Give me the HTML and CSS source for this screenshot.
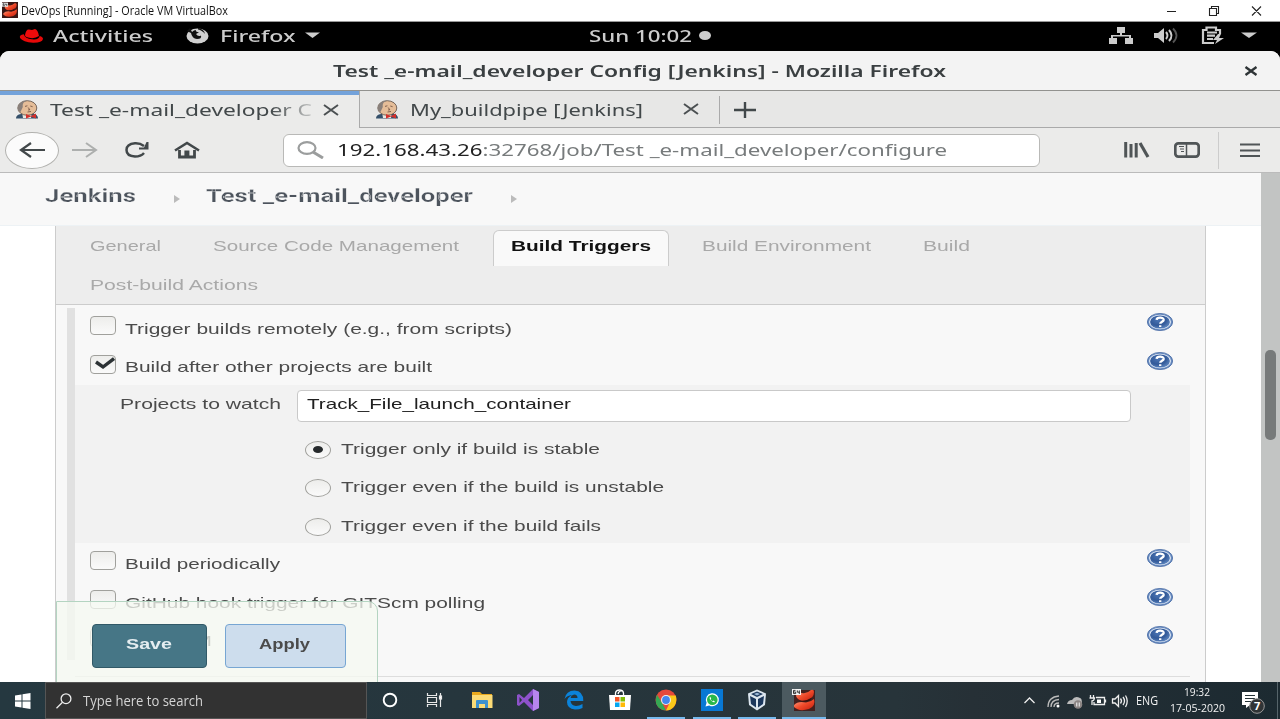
FILE: index.html
```html
<!DOCTYPE html>
<html lang="en">
<head>
<meta charset="utf-8">
<title>DevOps [Running] - Oracle VM VirtualBox</title>
<link rel="stylesheet" href="styles.css">
</head>
<body>
<svg class="defs" width="0" height="0">
  <defs>
    <radialGradient id="blue" cx=".4" cy=".35" r=".8"><stop offset="0" stop-color="#4a74b4"/><stop offset=".5" stop-color="#335a99"/><stop offset="1" stop-color="#6f98cf"/></radialGradient>
    <linearGradient id="hatred" x1="0" y1="0" x2="1" y2="1"><stop offset="0" stop-color="#ffa88a"/><stop offset=".5" stop-color="#f04a2a"/><stop offset="1" stop-color="#c01c0c"/></linearGradient>
    <symbol id="help" viewBox="0 0 26 18"><ellipse cx="13" cy="9" rx="12.6" ry="8.600" fill="#6a8dc2" stroke="#4669a3" stroke-width=".8"/><ellipse cx="13" cy="9" rx="11" ry="7.300" fill="#e3eaf5"/><ellipse cx="13" cy="9" rx="9.900" ry="6.600" fill="url(#blue)"/><path d="M9.600 6.800C9.800 3.900 16.800 3.800 16.700 6.900C16.600 8.700 13.200 8.700 13.200 10.800M13.200 12.200V14" fill="none" stroke="#fff" stroke-width="2.300"/></symbol>
    <symbol id="butler" viewBox="0 0 24 19"><path d="M1 18.500Q1 14.500 6 14L18 13.500Q23 14.500 23 18.500Z" fill="#34506a"/><path d="M7 12L17 12L16 18H8Z" fill="#ece7df"/><ellipse cx="12.300" cy="8" rx="9.500" ry="7.300" fill="#e5bd98" stroke="#594b42" stroke-width=".8"/><path d="M3.500 11C1 4 7 .4 13 .6C8 2 7.500 4 7.800 7L5.500 12Z" fill="#89807b"/><path d="M10 6.400L12.400 5.800M15.300 6L17.600 6.700M13.200 7.500L14.800 9.800L13 10M12.500 12L16 11.500" stroke="#65483a" fill="none" stroke-width=".8"/><path d="M11 14L16 16L21 13.500V18.500L16 16.500L11 18.500Z" fill="#d3302c"/></symbol>
    <symbol id="redhat" viewBox="0 0 24 24"><path d="M4 8Q5 4 10 5Q15 6 19 2Q22 1 22 4Q22 10 15 12.500Q6 14 4 8Z" fill="url(#hatred)"/><path d="M2 17Q6 12.500 14 14.500Q19 14 22 11Q24 18 17 21Q7 24 2 19Z" fill="url(#hatred)"/><path d="M7 12.500Q13 14 20 9.500L18 12.500Q12 15 7 12.500Z" fill="#38100d"/><rect x="0" y="1" width="9" height="6" fill="#f4f4f4"/><path d="M3.500 2.400H1.500V5.600H3.700V4H1.500M5.300 2.400V4.200H7.600M7.300 2.400V6" stroke="#222" fill="none" stroke-width=".9"/></symbol>
  </defs>
</svg>

<header class="host-title">
  <svg class="host-logo" width="16" height="16"><rect width="16" height="16" fill="#3a1715"/><use href="#redhat" width="16" height="16"/></svg>
  <span class="fit" data-w="207">DevOps [Running] - Oracle VM VirtualBox</span>
  <svg class="host-controls" width="94" height="14" fill="none" stroke="#222" stroke-width="1.100"><path d="M1 7.500H10M43.500 4.500H50.500V11.500H43.500ZM45.500 4V2.500H52.500V9.500H51M86 2.500L95 11.500M95 2.500L86 11.500" /></svg>
</header>

<nav class="gnome">
  <svg class="fedora" width="25" height="16"><path d="M6 7Q7 1 10 1.400L13 2L16 1Q19 2 20 8Q16 11 10 9.800Q6 9 6 7Z" fill="#f00b0b"/><path d="M4.800 6.300Q0 7 1 10Q4 14 14 14.800Q23 15 24 11Q24 9 20.700 8Q20 12 13 11.300Q6 10.700 4.800 6.300Z" fill="#e60808"/></svg>
  <span class="fit" data-w="100">Activities</span>
  <svg class="fox" width="23" height="16"><ellipse cx="11.500" cy="8" rx="11" ry="7.600" fill="#d0d0d0"/><path d="M4 0L6 4Q8 2 10 2Q9 4 13 4.200L10 6Q12 9 15 7.500Q16 11 11 11Q6 10.500 5 5L1 3ZM12 0Q18 1 19 6Q16 2 12 1.500Z" fill="#111"/></svg>
  <span class="fit" data-w="75.500">Firefox</span>
  <svg class="caret" width="15" height="7"><path d="M0 0.500H15L7.500 6Z" fill="#ccc"/></svg>
  <span class="fit clock" data-w="103">Sun 10:02</span>
  <i class="dot"></i>
  <svg class="gnome-tray" width="150" height="20" fill="#ccc"><path d="M8 1H16V7H13V9H22V12H24V18H16V12H20V10.500H4V12H8V18H0V12H2V9H11V7H8Z"/><path d="M45 7H49L55 2V17L49 12H45Z"/><path d="M57 6Q60 9.500 57 13M60 4Q65 9.500 60 15" fill="none" stroke="#ccc" stroke-width="2"/><path d="M64 2.500Q71 9.500 64 16.500" fill="none" stroke="#555" stroke-width="1.800"/><path d="M105 17H94V4H97.500V1.500H107V4H111V8M98 6.500H108M98 9.700H106M98 13H104" fill="none" stroke="#ccc" stroke-width="2.200"/><path d="M109 8L104 14H108L106 18L115 12H110L112 8Z"/><path d="M132 6.500H148L140 12Z"/></svg>
</nav>

<div class="guest">
<header class="window-title">
  <b class="fit" data-w="613">Test _e-mail_developer Config [Jenkins] - Mozilla Firefox</b>
  <svg width="14" height="10"><path d="M1.500 1L12.500 9M12.500 1L1.500 9" stroke="#2e3436" stroke-width="2.400"/></svg>
</header>

<div class="tabs">
  <div class="tab active">
    <svg width="24" height="19"><use href="#butler"/></svg>
    <span class="fade"><span class="fit" data-w="262">Test _e-mail_developer C</span></span>
    <svg class="x" width="16" height="12"><path d="M1 1L15 11M15 1L1 11" stroke="#4b5052" stroke-width="2"/></svg>
  </div>
  <div class="tab">
    <svg width="24" height="19"><use href="#butler"/></svg>
    <span class="fit" data-w="233">My_buildpipe [Jenkins]</span>
    <svg class="x" width="16" height="12"><path d="M1 1L15 11M15 1L1 11" stroke="#4b5052" stroke-width="2"/></svg>
  </div>
  <div class="strip"><i class="split"></i>
  <svg class="plus" width="22" height="16"><path d="M0 8H22M11 0V16" stroke="#42484a" stroke-width="2.400"/></svg></div>
</div>

<div class="toolbar">
  <div class="back"><svg width="26" height="16" fill="none" stroke="#42484a" stroke-width="2.200"><path d="M26 8H2M12 1L2 8L12 15"/></svg></div>
  <svg class="fwd" width="26" height="16" fill="none" stroke="#adafae" stroke-width="2"><path d="M0 8H24M14 1L24 8L14 15"/></svg>
  <svg class="reload" width="26" height="18" fill="none" stroke="#42484a" stroke-width="2.500"><path d="M20 5Q16 2 11 2.300Q2.500 3 2.500 9Q2.500 15 11 15.600Q17 15.600 20 12"/><path d="M24.500 1V8.500H15V6.500H20L22.500 1Z" fill="#42484a" stroke="none"/></svg>
  <svg class="home" width="26" height="18" fill="none" stroke="#42484a"><path d="M1 9.500L13 2L25 9.500" stroke-width="2.600"/><path d="M5.500 9V16H20.500V9" stroke-width="2.800"/><path d="M12.900 16V9.500" stroke-width="5"/></svg>
  <div class="url"><svg width="27" height="18" fill="none" stroke="#9b9d9d"><ellipse cx="10" cy="7" rx="8.500" ry="5.800" stroke-width="2.200"/><path d="M16 11L26 17" stroke-width="3"/></svg><span class="fit" data-w="610"><em>192.168.43.26</em>:32768/job/Test _e-mail_developer/configure</span></div>
  <svg class="lib" width="26" height="16" fill="none" stroke="#505557"><path d="M1.700 0V15.500M7 2V15.500M12.200 1V15.500" stroke-width="3"/><path d="M16 1L24 15" stroke-width="3.200"/></svg>
  <svg class="side" width="26" height="16" fill="none" stroke="#505557"><rect x="1.300" y="1.400" width="23.400" height="13.200" rx="3" stroke-width="2.700"/><path d="M12.500 1V15" stroke-width="1.500"/><path d="M5 4.500H10M6 7H10M7 9.500H10" stroke-width="1"/></svg>
  <i class="vline"></i>
  <svg class="menu" width="20" height="15"><path d="M0 1.500H20M0 7.500H20M0 13H20" stroke="#505557" stroke-width="2.200"/></svg>
</div>

<main class="page">
  <div class="view">
    <div class="crumbs">
      <b class="fit" data-w="91">Jenkins</b>
      <i></i>
      <b class="fit" data-w="267">Test _e-mail_developer</b>
      <i></i>
    </div>
    <section class="config">
      <div class="sections">
        <div class="line">
          <span class="fit" data-w="71">General</span>
          <span class="fit scm" data-w="246">Source Code Management</span>
          <div class="current"><b class="fit" data-w="140">Build Triggers</b></div>
          <span class="fit" data-w="169">Build Environment</span>
          <span class="fit bld" data-w="47">Build</span>
        </div>
        <div class="line second"><span class="fit" data-w="168">Post-build Actions</span></div>
      </div>
      <div class="form">
        <div class="rail"></div>
        <div class="rows">
          <div class="row"><span class="check"></span><span class="fit" data-w="387">Trigger builds remotely (e.g., from scripts)</span><svg class="help"><use href="#help"/></svg></div>
          <div class="row"><span class="check"><svg width="24" height="16"><path d="M5 6L12 11L23 2.500" fill="none" stroke="#2c3235" stroke-width="3.400"/></svg></span><span class="fit" data-w="307">Build after other projects are built</span><svg class="help"><use href="#help"/></svg></div>
          <div class="nested">
            <div class="watch"><span class="fit" data-w="161">Projects to watch</span><div class="field"><span class="fit" data-w="264">Track_File_launch_container</span></div></div>
            <div class="option"><span class="radio on"></span><span class="fit" data-w="259">Trigger only if build is stable</span></div>
            <div class="option"><span class="radio"></span><span class="fit" data-w="323">Trigger even if the build is unstable</span></div>
            <div class="option"><span class="radio"></span><span class="fit" data-w="260">Trigger even if the build fails</span></div>
          </div>
          <div class="row low"><span class="check"></span><span class="fit" data-w="155">Build periodically</span><svg class="help"><use href="#help"/></svg></div>
          <div class="row low"><span class="check"></span><span class="fit" data-w="360">GitHub hook trigger for GITScm polling</span><svg class="help"><use href="#help"/></svg></div>
          <div class="row low"><span class="check"></span><span class="fit" data-w="87">Poll SCM</span><svg class="help"><use href="#help"/></svg></div>
        </div>
      </div>
    </section>
    <div class="sticky"><button class="save"><b class="fit" data-w="46">Save</b></button><button class="apply"><b class="fit" data-w="51">Apply</b></button></div>
  </div>
  <div class="scroll"><i></i></div>
</main>
</div>

<footer class="taskbar">
  <div class="start"><svg width="16" height="16" fill="#fff"><path d="M0 2.400L6.500 1.500V7.500H0ZM7.500 1.300L15.500 0V7.500H7.500ZM0 8.500H6.500V14.500L0 13.600ZM7.500 8.500H15.500V16L7.500 14.700Z"/></svg></div>
  <div class="search"><svg width="16" height="16" fill="none" stroke="#eee" stroke-width="1.300"><circle cx="10" cy="5.700" r="4.900"/><path d="M6.500 9.200L.500 15.300"/></svg><span class="fit" data-w="120">Type here to search</span></div>
  <div class="app"><svg width="16" height="16"><circle cx="8" cy="8" r="6.300" fill="none" stroke="#fff" stroke-width="1.900"/></svg></div>
  <div class="app task"><svg width="17" height="16" fill="none" stroke="#e8e8e8" stroke-width="1.200"><path d="M1.500 1V3.500H10.500V1M1.500 15V12.500H10.500V15M1.500 5.500H10.500V10.500H1.500ZM14.500 1V15"/><rect x="13.500" y="4" width="2" height="3" fill="#fff"/></svg></div>
  <div class="app"><svg width="21" height="18"><path d="M0 1H8L10 3H20V17H0Z" fill="#e9a91e"/><path d="M0 4H20.500V17H0Z" fill="#fbdb76"/><path d="M4 17V10Q4 9 5 9H15Q16 9 16 10V17H13V13H7V17Z" fill="#3d91cf"/></svg></div>
  <div class="app"><svg width="24" height="22"><path d="M17 0L23 3V19L17 22L8 13L3 17L1 16V6L3 5L8 9ZM17 6L12 11L17 16ZM3.500 8V14L6 11Z" fill="#8e52cb" fill-rule="evenodd"/><path d="M17 0L23 3V19L17 22Z" fill="#b785ed"/></svg></div>
  <div class="app"><svg width="20" height="20"><path d="M.500 9Q2 .5 10.500 .5Q19.500 1 19.300 11H6.500Q7 15.500 12 16Q15 16 18.500 14V18Q15 19.600 11 19.500Q3 18.500 3 12Q3 7.500 8 5Q3 5.500 .5 9ZM6.700 8H13.500Q13.500 4.500 10.300 4.500Q7 5 6.700 8Z" fill="#0b83da" fill-rule="evenodd"/></svg></div>
  <div class="app"><svg width="22" height="22"><path d="M6.500 6V4Q7 1 10.500 1Q14 1 14.500 4V6M9 5Q10 1 14 2" fill="none" stroke="#fff" stroke-width="1.300"/><path d="M0 6H22L21 21H1Z" fill="#fff"/><path d="M6 8H10.500V12.500H6Z" fill="#f35325"/><path d="M11.500 8H16V12.500H11.500Z" fill="#81bc06"/><path d="M6 13.500H10.500V18H6Z" fill="#05a6f0"/><path d="M11.500 13.500H16V18H11.500Z" fill="#ffba08"/></svg></div>
  <div class="app running"><svg width="22" height="22"><circle cx="11" cy="11" r="10.500" fill="#e5493a"/><path d="M2 5.700L8 15.500L11 21.500Q3 21 1 14Q0 10 2 5.700Z" fill="#35a853"/><path d="M11 6.500H20.700Q22.500 12 19.500 17Q16 21.500 11 21.500L15 13Z" fill="#fbc919"/><circle cx="11" cy="11" r="5" fill="#eee"/><circle cx="11" cy="11" r="3.900" fill="#4386ed"/></svg></div>
  <div class="app running"><svg width="22" height="22"><rect width="22" height="22" fill="#0878d4"/><path d="M4.500 17.500L5.600 13.700A6.500 6.500 0 1 1 8.200 16.400Z" fill="#fff"/><circle cx="11.300" cy="10.800" r="5.300" fill="#28b84b"/><path d="M9.200 7.800Q7.700 9 10 11.600Q12.700 14.400 14 12.700L12.400 11.500L11.500 12.200Q10 11.200 9.700 10.200L10.200 9.500Z" fill="#fff"/></svg></div>
  <div class="app running vbox"><svg width="20" height="22"><path d="M10 .5L19 4.500L18 16L10 21.500L2 16L1 4.500Z" fill="#dce6ef"/><path d="M10 2.500L16 5L10 8L4 5ZM3 7L9 10V18.500L4 15ZM17 7L11 10V18.500L16 15Z" fill="#1b375c"/><path d="M10 3.700L13 5L10 6.500L7 5Z" fill="#9ab7d5"/></svg></div>
  <div class="app running focus"><svg width="24" height="24"><rect x="2" y="2" width="21" height="21" fill="#44201e"/><use href="#redhat" width="24" height="24"/></svg></div>
  <div class="tray">
    <svg class="status" width="104" height="16" fill="none" stroke="#eee" stroke-width="1.300"><path d="M.500 10L5.500 5L10.500 10"/><path d="M24 14Q24 4 35 3M27 14Q27 7 35 6.500M30 14Q30 10 35 10" stroke="#bbb"/><circle cx="34" cy="13" r="1.500" fill="#fff" stroke="none"/><path d="M43 11Q44 7 48 7Q51 2 56 5Q58 5 58 11H43Z" fill="#bbb" stroke="none"/><circle cx="54" cy="11.500" r="4.300" fill="#8c8584" stroke="none"/><path d="M52.700 9.500V13.500M55.300 9.500V13.500" stroke="#ddd"/><path d="M72 4.500H80.500V11.500H70V9M81.500 6.500V9.500M66.500 2V5M69.500 2V5M65.500 5H70.500Q70 8 68 8V12" /><rect x="73" y="6.500" width="4" height="3.500" fill="#fff" stroke="none"/><path d="M88.500 6H91L94.500 2.500V13.500L91 10H88.500ZM96.500 5.500Q98.500 8 96.500 10.500M99 4Q102 8 99 12M101.500 2.500Q105 8 101.500 14"/></svg>
    <span class="fit lang" data-w="22">ENG</span>
    <div class="when"><span class="fit" data-w="26">19:32</span><span class="fit" data-w="55">17-05-2020</span></div>
    <svg class="note" width="24" height="24"><path d="M0 1H16V14H8L4 17V14H0Z" fill="#fff"/><path d="M3 4.500H13M3 7.500H13M3 10.500H10" stroke="#263439"/><circle cx="15" cy="15" r="7.300" fill="#303436" stroke="#999"/><text x="12" y="19">7</text></svg>
    <i class="peek"></i>
  </div>
</footer>
<script src="fit.js"></script>
</body>
</html>
```
FILE: styles.css
```css
* { box-sizing: border-box; }
body { margin: 0; width: 1280px; height: 719px; overflow: hidden; background: #000; font-family: "Noto Sans", sans-serif; color: #42484a; display: flex; flex-direction: column; }
svg { display: block; flex: none; }
.defs { position: absolute; }
.fit { display: inline-block; white-space: pre; transform-origin: 0 50%; flex: none; align-self: flex-start; }

.host-title { height: 22px; flex: none; background: #fff; display: flex; align-items: center; padding-left: 2px; font: 12px "Open Sans", sans-serif; color: #111; border-bottom: 1px solid #999; }
.host-logo { margin: 0 3px 1px 0; }
.host-title .fit, .gnome .fit, .window-title .fit, .tab > .fit, .url .fit, .search .fit, .lang { align-self: center; }
.host-controls { margin-left: 938px; overflow: visible; }

.gnome { height: 29px; flex: none; display: flex; align-items: center; color: #ccc; font-size: 15.500px; font-weight: 500; padding: 0 0 2px 19px; background: #000; }
.fedora { margin-right: 9px; }
.fox { margin: 0 11px 0 33px; }
.caret { margin-left: 9px; }
.clock { margin-left: 269px; }
.dot { width: 12px; height: 9px; border-radius: 50%; background: #ccc; margin-left: 7px; }
.gnome-tray { margin-left: 398px; }

.guest { flex: none; height: 631px; background: #ebebea; border-radius: 9px 9px 0 0; overflow: hidden; }
.window-title { height: 40px; background: #f3f3f3; display: flex; align-items: center; padding-left: 333px; border-bottom: 1px solid #92928f; font-size: 16px; color: #3a3f41; }
.window-title b { font-weight: 600; }
.window-title svg { margin-left: 298px; }
.tabs { height: 37px; display: flex; font-size: 16.500px; background: #e7e7e6; align-items: stretch; }
.tab { width: 360px; display: flex; align-items: center; border: solid #aaa; border-width: 0 0 1px 1px; padding-left: 15px; }
.tab.active { width: 359px; flex: none; border: 0; border-top: 4px solid #73a2da; background: #ebebea; padding: 0 0 4px 15px; }
.tab > svg:first-child { margin-right: 11px; }
.fade { width: 262px; overflow: hidden; mask-image: linear-gradient(90deg, #000 84%, transparent 105%); }
.x { margin-left: 40px; }
.tab.active .x { margin-left: 11px; }
.strip { flex: 1; display: flex; border-bottom: 1px solid #aaa; }
.split { width: 1px; height: 28px; background: #aaa; margin-top: 5px; }
.plus { margin: 11px 0 0 14px; }

.toolbar { height: 45px; display: flex; align-items: center; padding-left: 5px; border-bottom: 1px solid #bbb; }
.back { width: 54px; height: 37px; border: 1px solid #b1b1ae; border-radius: 50%; background: #fbfbfb; display: flex; align-items: center; justify-content: center; }
.fwd { margin-left: 13px; }
.reload { margin-left: 26px; }
.home { margin-left: 24px; }
.url { width: 757px; height: 33px; margin-left: 83px; background: #fff; border: 1px solid #b9b9b7; border-radius: 6px; display: flex; align-items: center; padding: 0 0 1px 13px; font-size: 16.500px; color: #777b7c; }
.url svg { margin-right: 13px; }
.url em { font-style: normal; color: #222; }
.lib { margin-left: 84px; }
.side { margin-left: 24px; }
.vline { width: 1px; height: 37px; background: #ccc; margin-left: 18px; }
.menu { margin-left: 21px; }

.page { height: 509px; display: flex; }
.view { width: 1261px; position: relative; overflow: hidden; background: #fff; }
.scroll { width: 19px; background: #c2c4c3; padding: 177px 4px 0; }
.scroll i { display: block; width: 11px; height: 90px; border-radius: 5px; background: #777a7a; }
.crumbs { height: 53px; display: flex; background: #f8f8f8; padding: 10px 0 0 45px; border-bottom: 1px solid #edf2f5; font: 18px/26px Roboto, sans-serif; color: #4d545d; }
.crumbs b { font-weight: 700; font-size: 17.500px; -webkit-text-stroke: .25px #f8f8f8; }
.crumbs i { margin: 12px 26px 0 38px; border: solid transparent; border-width: 4px 0 4px 6px; border-left-color: #bbb; height: 8px; }
.config { margin: 0 55px; height: 470px; background: #f8f8f8; border: solid #ccc; border-width: 0 1px; font: 15px/20px "Liberation Sans", sans-serif; color: #4b4b4b; }
.sections { height: 79px; background: #ededed; border-bottom: 1px solid #ccc; color: #a9a9a9; }
.line { height: 40px; display: flex; padding: 10px 0 0 34px; }
.line.second { padding-top: 9px; }
.scm { margin-left: 52px; }
.current { height: 36px; width: 176px; margin: -6px 33px 0 34px; padding: 5px 0 0 17px; color: #111; background: #f9f9f9; border: 1px solid #ccc; border-bottom: 0; border-radius: 6px 6px 0 0; }
.bld { margin-left: 52px; }
.form { display: flex; padding: 3px 15px 0 11px; height: 372px; }
.rail { width: 8px; height: 352px; background: #e1e1e1; flex: none; }
.rows { flex: 1; border-bottom: 1px solid #ddd; }
.row { height: 38.500px; display: flex; padding-left: 14.500px; }
.check { width: 26px; height: 19px; margin: 8px 9px 0 0; border: 1.500px solid #a0a09c; border-radius: 4px; background: linear-gradient(#ededeb, #fafafa); flex: none; }
.row .fit { margin-top: 10.500px; }
.help { width: 26px; height: 18px; margin: 5px 17px 0 auto; }
.low .help { margin-top: 6px; }
.low .fit { margin-top: 11px; }
.nested { height: 158px; background: #f2f2f2; padding-top: 5px; }
.watch { display: flex; height: 43px; padding-left: 45px; }
.watch > .fit { margin-top: 4px; }
.field { width: 834px; height: 32px; margin-left: 16px; padding: 3px 0 0 9px; background: #fff; border: 1px solid #c9c9c9; border-radius: 4px; color: #202020; }
.option { height: 38.500px; padding: 5.500px 0 0 230px; display: flex; gap: 10px; }
.radio { width: 26px; height: 18px; border: 1.500px solid #a0a09c; border-radius: 50%; background: linear-gradient(#ededeb, #fafafa); margin-top: 2px; display: flex; align-items: center; justify-content: center; }
.radio.on::after { content: ""; width: 10px; height: 7px; border-radius: 50%; background: #25292b; }
.sticky { position: absolute; left: 56px; top: 428px; width: 322px; height: 90px; background: rgba(245, 249, 241, .75); border: 1.500px solid #b4d4c1; border-radius: 0 10px 0 0; padding: 22px 0 0 35px; display: flex; gap: 18px; }
.sticky button { height: 44px; border-radius: 4px; padding: 0 0 5px 33px; text-align: left; font: bold 15px "Liberation Sans", sans-serif; }
.save { width: 115px; background: #467686; border: 1px solid #315967; color: #e4edf0; }
.apply { width: 121px; background: #cddded; border: 1.500px solid #77a6d3; color: #4b4b4b; }

.taskbar { height: 37px; flex: none; display: flex; background: linear-gradient(90deg, #253840, #27343a 70%, #263036 76%, #1c2a31); font: 12px "Open Sans", sans-serif; color: #f2f2f2; }
.start { width: 45px; display: flex; align-items: center; justify-content: center; }
.search { width: 322px; background: #323232; border: 1px solid #555; display: flex; align-items: center; padding-left: 10px; font-size: 14px; color: #d4d4d4; }
.search svg { margin-right: 11px; }
.app { width: 46px; display: flex; align-items: center; justify-content: center; border-bottom: 2px solid transparent; }
.app.task { padding-right: 3px; }
.app.vbox { padding-right: 0; }
.running { width: 38px; margin: 0 4px; border-bottom: 2px solid #76b9ed; }
.running.vbox { margin: 0 5px 0 3px; }
.running.focus { width: 44px; margin: 0 1px; background: #4c5a60; }
.tray { flex: 1; display: flex; align-items: center; padding-left: 197px; }
.status { overflow: visible; }
.lang { margin-left: 8px; }
.when { width: 56px; margin-left: 12px; display: flex; flex-direction: column; line-height: 16px; font-size: 11.500px; padding-bottom: 1px; }
.when .fit:first-child { margin-left: 14px; }
.note { margin: 4px 0 0 16px; }
.note text { font: bold 11px "Open Sans", sans-serif; fill: #fff; }
.peek { width: 1px; height: 37px; background: #56646a; margin-left: 11px; }
```
FILE: fit.js
```js
document.querySelectorAll(".fit").forEach(function (el) {
  var natural = el.getBoundingClientRect().width;
  var wanted = parseFloat(el.dataset.w);
  el.style.transform = "scaleX(" + wanted / natural + ")";
  el.style.marginRight = wanted - natural + "px";
});
```
